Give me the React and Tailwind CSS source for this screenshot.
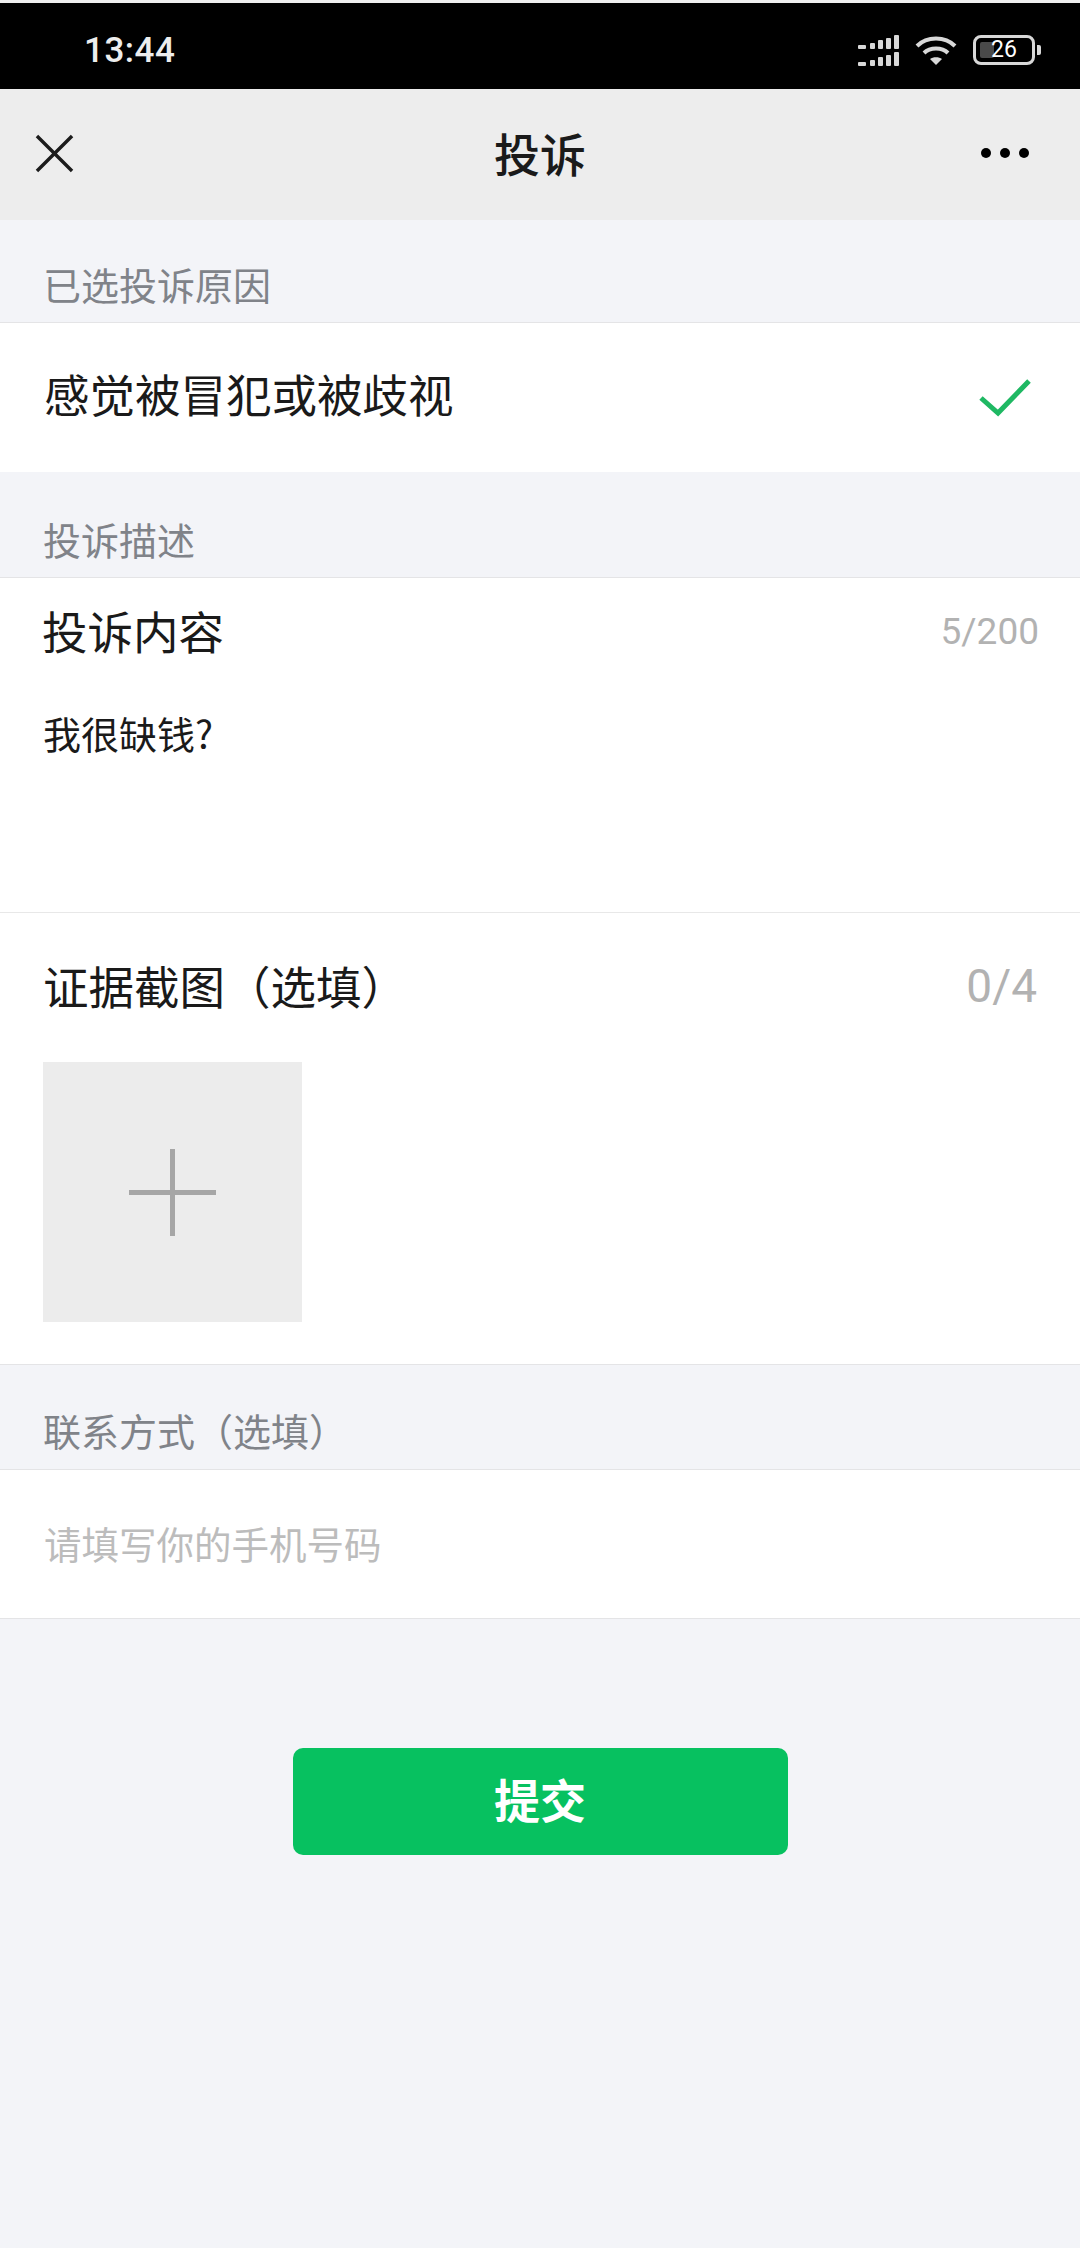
const cjk = { fontFamily: '"Noto Sans CJK SC", sans-serif' }

// Signal bars, two rows of five rising bars
function Signal() {
  const bars = [
    [0, 8, 10],
    [12, 5, 8],
    [20, 5, 5],
    [28, 5, 3],
    [36, 5, 0],
  ]
  return (
    <svg width="41" height="31" viewBox="0 0 41 31" fill="#d8d8d8">
      {bars.map(([x, w, top]) => (
        <g key={x}>
          <rect x={x} y={top} width={w} height={14 - top} rx="1" />
          <rect x={x} y={top + 17} width={w} height={14 - top} rx="1" />
        </g>
      ))}
    </svg>
  )
}

function Wifi() {
  return (
    <svg width="42" height="30" viewBox="0 0 42 30" fill="none" stroke="#d8d8d8" strokeWidth="4">
      <path d="M2 11 C12 1 30 1 40 11" />
      <path d="M9 18 C15 12 27 12 33 18" />
      <path d="M21 30 L15 24 C18 21.500 24 21.500 27 24 Z" fill="#d8d8d8" stroke="none" />
    </svg>
  )
}

function Battery() {
  return (
    <div className="flex items-center gap-[2px]">
      <div className="relative w-[62px] h-[30px] rounded-[8px] border-[3px] border-[#d8d8d8]">
        <div className="absolute left-[4px] top-[4px] w-[14px] h-[16px] rounded-[2px] bg-[#4a4a4a]" />
        <span className="absolute left-[15px] top-[0px] text-[23px] leading-[24px] text-white" style={{ fontFamily: 'Roboto, sans-serif' }}>26</span>
      </div>
      <div className="w-[4px] h-[10px] rounded-r-[2px] bg-[#d8d8d8]" />
    </div>
  )
}

function SectionLabel({ text, className }) {
  return (
    <div className={`flex items-end pl-[43px] text-[38px] leading-[50px] text-[#808389] border-b border-[#e4e4e6] ${className}`}>
      {text}
    </div>
  )
}

export default function App() {
  return (
    <div className="w-[1080px] h-[2248px] flex flex-col bg-[#f3f4f8]" style={cjk}>
      {/* status bar */}
      <div className="h-[3px] bg-[#efefef]" />
      <div className="h-[86px] bg-black flex items-center justify-between pt-[8px] pl-[84px] pr-[39px]">
        <span className="mt-[2px] text-[35px] font-medium tracking-[0.5px] text-[#ededed]" style={{ fontFamily: 'Roboto, sans-serif' }}>13:44</span>
        <div className="flex items-center gap-[16px]">
          <Signal />
          <Wifi />
          <Battery />
        </div>
      </div>

      {/* nav bar */}
      <div className="relative h-[131px] bg-[#ededed] flex items-center justify-between pl-[35px] pr-[51px]">
        <svg width="39" height="39" viewBox="0 0 40 40" stroke="#1c1c1c" strokeWidth="3.500" className="mb-[3px]">
          <path d="M2 2 L38 38 M38 2 L2 38" />
        </svg>
        <span className="absolute left-0 right-0 top-[33px] text-center text-[46px] leading-[60px] font-medium text-[#1a1a1a]">投诉</span>
        <div className="flex gap-[9px] mb-[3px]">
          <span className="w-[10px] h-[10px] rounded-full bg-black" />
          <span className="w-[10px] h-[10px] rounded-full bg-black" />
          <span className="w-[10px] h-[10px] rounded-full bg-black" />
        </div>
      </div>

      <SectionLabel text="已选投诉原因" className="h-[103px] pb-[13px]" />

      {/* selected reason */}
      <div className="h-[149px] bg-white flex items-center justify-between pl-[44px] pr-[48px]">
        <span className="text-[45.5px] leading-[60px] text-[#1a1a1a] mb-[9px]">感觉被冒犯或被歧视</span>
        <svg width="54" height="40" viewBox="0 0 54 40" fill="none" stroke="#1fb863" strokeWidth="5" className="mt-[1px]">
          <path d="M3 20 L20 35 L51 3" />
        </svg>
      </div>

      <SectionLabel text="投诉描述" className="h-[106px] pb-[13px]" />

      {/* description card */}
      <div className="bg-white">
        <div className="h-[335px] pl-[43px] border-b border-[#e8e8e8] flex flex-col">
          <div className="flex items-center justify-between pr-[41px] pt-[22px]">
            <span className="text-[45.5px] leading-[60px] -ml-[1px] text-[#1a1a1a]">投诉内容</span>
            <span className="mt-[3px] text-[37px] leading-[50px] text-[#b2b2b2]" style={{ fontFamily: 'Roboto, sans-serif' }}>5/200</span>
          </div>
          <p className="mt-[48px] text-[38px] leading-[50px] text-[#1a1a1a]">我很缺钱?</p>
        </div>

        <div className="h-[452px] pl-[43px] border-b border-[#e4e4e6] flex flex-col">
          <div className="flex items-center justify-between pr-[43px] pt-[41px]">
            <span className="text-[45.5px] leading-[60px] text-[#1a1a1a]">证据截图（选填）</span>
            <span className="mt-[2px] text-[46px] leading-[60px] text-[#b2b2b2]" style={{ fontFamily: 'Roboto, sans-serif' }}>0/4</span>
          </div>
          <div className="mt-[46px] w-[259px] h-[260px] bg-[#ececec] flex items-center justify-center">
            <svg width="87" height="87" viewBox="0 0 87 87" fill="#a6a6a6">
              <rect x="41" y="0" width="5" height="87" />
              <rect x="0" y="41" width="87" height="5" />
            </svg>
          </div>
        </div>
      </div>

      <SectionLabel text="联系方式（选填）" className="h-[105px] pb-[14px]" />

      {/* contact */}
      <div className="h-[149px] bg-white border-b border-[#e4e4e6] flex items-center pl-[44px]">
        <span className="mb-[3px] text-[37.5px] leading-[50px] text-[#bcbcbc]">请填写你的手机号码</span>
      </div>

      {/* submit */}
      <div className="flex justify-center pt-[129px]">
        <button className="w-[495px] h-[107px] rounded-[10px] bg-[#07c160] pb-[6px] text-[46px] font-bold text-white">提交</button>
      </div>
    </div>
  )
}
